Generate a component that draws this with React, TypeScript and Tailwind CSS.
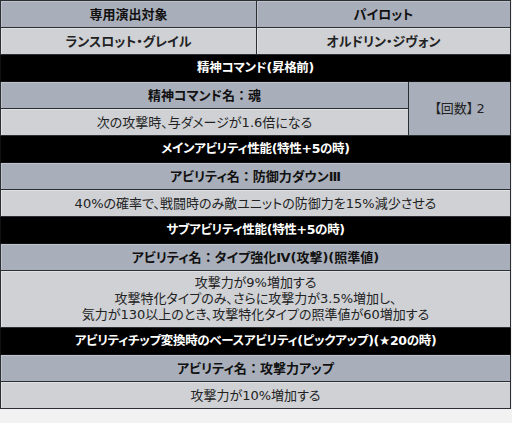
import React from "react";

const font = {
  fontFamily: '"DejaVu Sans", "Noto Sans CJK JP", sans-serif',
  fontFeatureSettings: '"palt"',
};

// full-width colon keeps its natural spacing like the reference
const Colon = () => <span className="[font-feature-settings:normal]">：</span>;

function Dark({ children, colSpan = 2 }: { children: React.ReactNode; colSpan?: number }) {
  return (
    <td colSpan={colSpan} className="h-[27px] bg-[#a9afba] text-center text-[13px] font-bold text-[#111] border border-[#2b2e33] shadow-[inset_1px_1px_0_rgba(255,255,255,0.25)]">
      {children}
    </td>
  );
}

function Light({ children, colSpan = 2 }: { children: React.ReactNode; colSpan?: number }) {
  return (
    <td colSpan={colSpan} className="h-[27px] bg-[#cfd1d5] text-center text-[13px] text-[#222] border border-[#2b2e33] shadow-[inset_1px_1px_0_rgba(255,255,255,0.35)]">
      {children}
    </td>
  );
}

function Head({ children }: { children: React.ReactNode }) {
  return (
    <tr>
      <td colSpan={3} className="h-[27px] bg-black text-center text-[12.5px] font-bold tracking-[-0.3px] text-white border border-[#111]">
        {children}
      </td>
    </tr>
  );
}

export default function App() {
  return (
    <div className="h-[423px] w-[512px] bg-[#f2f2f2]" style={font}>
      <table className="w-[510px] border-collapse table-fixed leading-none">
        <colgroup>
          <col className="w-[256px]" />
          <col className="w-[152px]" />
          <col className="w-[102px]" />
        </colgroup>
        <tbody>
          <tr>
            <Dark colSpan={1}>専用演出対象</Dark>
            <Dark colSpan={2}>パイロット</Dark>
          </tr>
          <tr>
            <Light colSpan={1}><span className="font-bold">ランスロット・グレイル</span></Light>
            <Light colSpan={2}><span className="font-bold">オルドリン・ジヴォン</span></Light>
          </tr>
          <Head>精神コマンド(昇格前)</Head>
          <tr>
            <Dark>精神コマンド名<Colon />魂</Dark>
            <td rowSpan={2} className="bg-[#a9afba] text-center text-[13px] text-[#222] border border-[#2b2e33]">
              【回数】<span className="ml-[3px]">2</span>
            </td>
          </tr>
          <tr>
            <Light>次の攻撃時、与ダメージが1.6倍になる</Light>
          </tr>
          <Head>メインアビリティ性能(特性+5の時)</Head>
          <tr>
            <Dark colSpan={3}>アビリティ名<Colon />防御力ダウンⅢ</Dark>
          </tr>
          <tr>
            <Light colSpan={3}>40%の確率で、戦闘時のみ敵ユニットの防御力を15%減少させる</Light>
          </tr>
          <Head>サブアビリティ性能(特性+5の時)</Head>
          <tr>
            <Dark colSpan={3}>アビリティ名<Colon />タイプ強化Ⅳ(攻撃)(照準値)</Dark>
          </tr>
          <tr>
            <td colSpan={3} className="h-[57px] bg-[#cfd1d5] text-center text-[13px] text-[#222] border border-[#2b2e33] shadow-[inset_1px_1px_0_rgba(255,255,255,0.35)]">
              <div className="leading-[16px]">攻撃力が9%増加する</div>
              <div className="leading-[16px]">攻撃特化タイプのみ、さらに攻撃力が3.5%増加し、</div>
              <div className="leading-[16px]">気力が130以上のとき、攻撃特化タイプの照準値が60増加する</div>
            </td>
          </tr>
          <Head>アビリティチップ変換時のベースアビリティ(ピックアップ)(★20の時)</Head>
          <tr>
            <Dark colSpan={3}>アビリティ名<Colon />攻撃力アップ</Dark>
          </tr>
          <tr>
            <Light colSpan={3}>攻撃力が10%増加する</Light>
          </tr>
        </tbody>
      </table>
    </div>
  );
}
